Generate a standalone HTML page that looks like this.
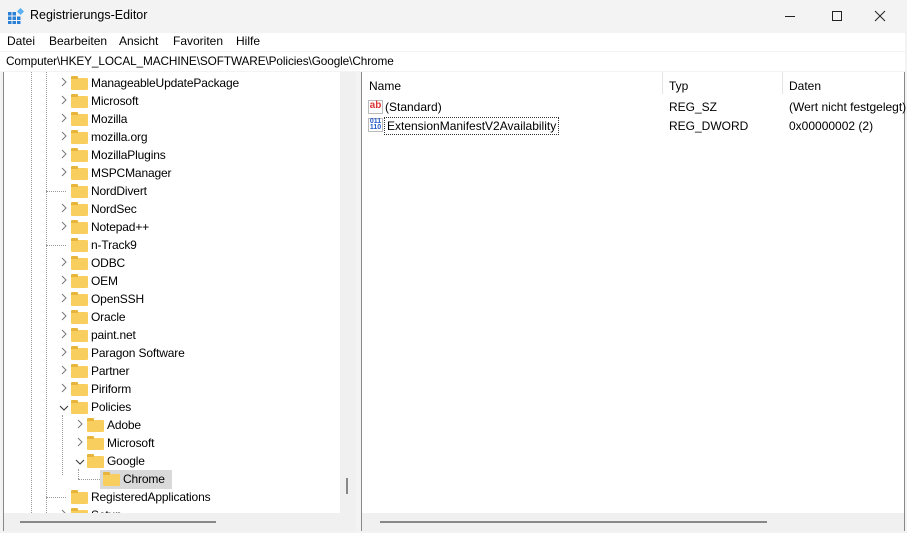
<!DOCTYPE html>
<html><head><meta charset="utf-8"><style>
*{margin:0;padding:0;box-sizing:border-box}
body{width:907px;height:533px;overflow:hidden;background:#f3f3f3;font-family:"Liberation Sans",sans-serif;font-size:12px;color:#000;position:relative}
.abs{position:absolute}
.title{left:30px;top:8px;font-size:12.5px}
.menu{top:33px;left:0;width:905px;height:18px;background:#fff}
.menu span{position:absolute;top:1px}
.addr{top:52px;left:0;width:905px;height:19px;background:#fff;padding:2px 0 0 6px;font-size:11.8px;letter-spacing:-0.1px}
.tree{left:3px;top:72px;width:353px;height:459px;background:#fff;border-left:1px solid #888;overflow:hidden}
.list{left:361px;top:72px;width:544px;height:459px;background:#fff;border-left:1px solid #888;border-right:1px solid #888}
.row{position:absolute;height:18px;line-height:18px;white-space:nowrap}
.fold{position:absolute;top:3px;width:17px;height:12px;background:#f8cf5f;border-radius:1px}
.fold:before{content:"";position:absolute;left:0;top:-2px;width:7px;height:3px;background:#e8b53c;border-radius:1px 1px 0 0}
.chev{position:absolute;top:0;color:#666;font-size:11px}
.dv{position:absolute;border-left:1px dotted #999;width:0}
.hs{position:absolute;background:#f0f0f0}
</style></head><body>
<svg class="abs" style="left:8px;top:8px" width="16" height="16"><g fill="#2a7fd6"><rect x="0" y="4" width="3.5" height="3.5"/><rect x="4.5" y="4" width="3.5" height="3.5"/><rect x="0" y="8.5" width="3.5" height="3.5"/><rect x="4.5" y="8.5" width="3.5" height="3.5"/><rect x="9" y="8.5" width="3.5" height="3.5"/><rect x="0" y="13" width="3.5" height="3"/><rect x="4.5" y="13" width="3.5" height="3"/><rect x="9" y="13" width="3.5" height="3"/></g><rect x="10" y="1" width="5" height="5" fill="#5ab0f0" transform="rotate(45 12.5 3.5)"/></svg>
<div class="abs title">Registrierungs-Editor</div>
<svg class="abs" style="left:785px;top:9px" width="110" height="14" stroke="#222" stroke-width="1" fill="none"><path d="M0 7.5h10"/><path d="M47.5 2.5h9v9h-9z"/><path d="M90 2l10 10M100 2l-10 10"/></svg>
<div class="abs menu"><span style="left:7px">Datei</span><span style="left:49px">Bearbeiten</span><span style="left:119px">Ansicht</span><span style="left:173px">Favoriten</span><span style="left:236px">Hilfe</span></div>
<div class="abs addr">Computer\HKEY_LOCAL_MACHINE\SOFTWARE\Policies\Google\Chrome</div>
<div class="abs tree">
<div class="dv" style="left:27px;top:0;height:441px"></div>
<div class="dv" style="left:42px;top:0;height:441px"></div>
<div class="dv" style="left:58px;top:343px;height:60px"></div>
<div class="dv" style="left:74px;top:397px;height:10px"></div>
<div style="position:absolute;left:74px;top:407px;width:22px;border-top:1px dotted #999"></div>
<div style="position:absolute;left:96px;top:398px;width:72px;height:19px;background:#d9d9d9"></div>
<div id="rows"></div>
<div class="hs" style="left:0;top:441px;width:353px;height:18px"></div>
<div style="position:absolute;left:16px;top:449px;width:196px;height:2px;background:#888"></div>
<div class="hs" style="left:336px;top:0;width:17px;height:441px"></div>
<div style="position:absolute;left:342px;top:406px;width:2px;height:16px;background:#888"></div>
</div>
<div class="abs list">
<div class="row" style="left:7px;top:5px">Name</div>
<div class="row" style="left:307px;top:5px">Typ</div>
<div class="row" style="left:427px;top:5px">Daten</div>
<div style="position:absolute;left:300px;top:0;height:22px;border-left:1px solid #e5e5e5"></div>
<div style="position:absolute;left:420px;top:0;height:22px;border-left:1px solid #e5e5e5"></div>
<div style="position:absolute;left:6px;top:28px;width:15px;height:14px;background:#fff;border:1px solid #bbb;color:#d33;font-size:10px;font-weight:bold;line-height:10px;text-align:center">ab</div>
<div class="row" style="left:23px;top:26px">(Standard)</div>
<div class="row" style="left:307px;top:26px">REG_SZ</div>
<div class="row" style="left:427px;top:26px">(Wert nicht festgelegt)</div>
<div style="position:absolute;left:6px;top:46px;width:15px;height:14px;background:#fff;border:1px solid #bbb;color:#2258c8;font-size:7px;font-weight:bold;line-height:6px;text-align:center">011<br>110</div>
<div class="row" style="left:22px;top:45px;border:1px dotted #333;height:18px;padding:0 2px;line-height:16px">ExtensionManifestV2Availability</div>
<div class="row" style="left:307px;top:45px">REG_DWORD</div>
<div class="row" style="left:427px;top:45px">0x00000002 (2)</div>
<div class="hs" style="left:0;top:441px;width:542px;height:18px"></div>
<div style="position:absolute;left:18px;top:449px;width:387px;height:2px;background:#888"></div>
</div>
<script>
var items=[["ManageableUpdatePackage",0,1],["Microsoft",0,1],["Mozilla",0,1],["mozilla.org",0,1],["MozillaPlugins",0,1],["MSPCManager",0,1],["NordDivert",0,0],["NordSec",0,1],["Notepad++",0,1],["n-Track9",0,0],["ODBC",0,1],["OEM",0,1],["OpenSSH",0,1],["Oracle",0,1],["paint.net",0,1],["Paragon Software",0,1],["Partner",0,1],["Piriform",0,1],["Policies",0,2],["Adobe",1,1],["Microsoft",1,1],["Google",1,2],["Chrome",2,0],["RegisteredApplications",0,0],["Setup",0,1]];
var h="";items.forEach(function(it,i){var t=2+i*18,b=57+it[1]*16;
if(it[2]==1)h+='<div class="chev" style="left:'+(b-1)+'px;top:'+(t+3)+'px"><svg width="8" height="10"><path d="M2 1l4 4-4 4" stroke="#777" fill="none"/></svg></div>';
else if(it[2]==2)h+='<div class="chev" style="left:'+(b-2)+'px;top:'+(t+5)+'px"><svg width="10" height="8"><path d="M1 2l4 4 4-4" stroke="#333" fill="none"/></svg></div>';
else if(it[1]<2)h+='<div style="position:absolute;left:'+(b-15)+'px;top:'+(t+9)+'px;width:20px;border-top:1px dotted #999"></div>';
h+='<div class="fold" style="left:'+(b+10)+'px;top:'+(t+4)+'px"></div><div class="row" style="left:'+(b+30)+'px;top:'+t+'px;font-size:12px;letter-spacing:-0.15px">'+it[0]+'</div>';});
document.getElementById("rows").innerHTML=h;
</script>
</body></html>
